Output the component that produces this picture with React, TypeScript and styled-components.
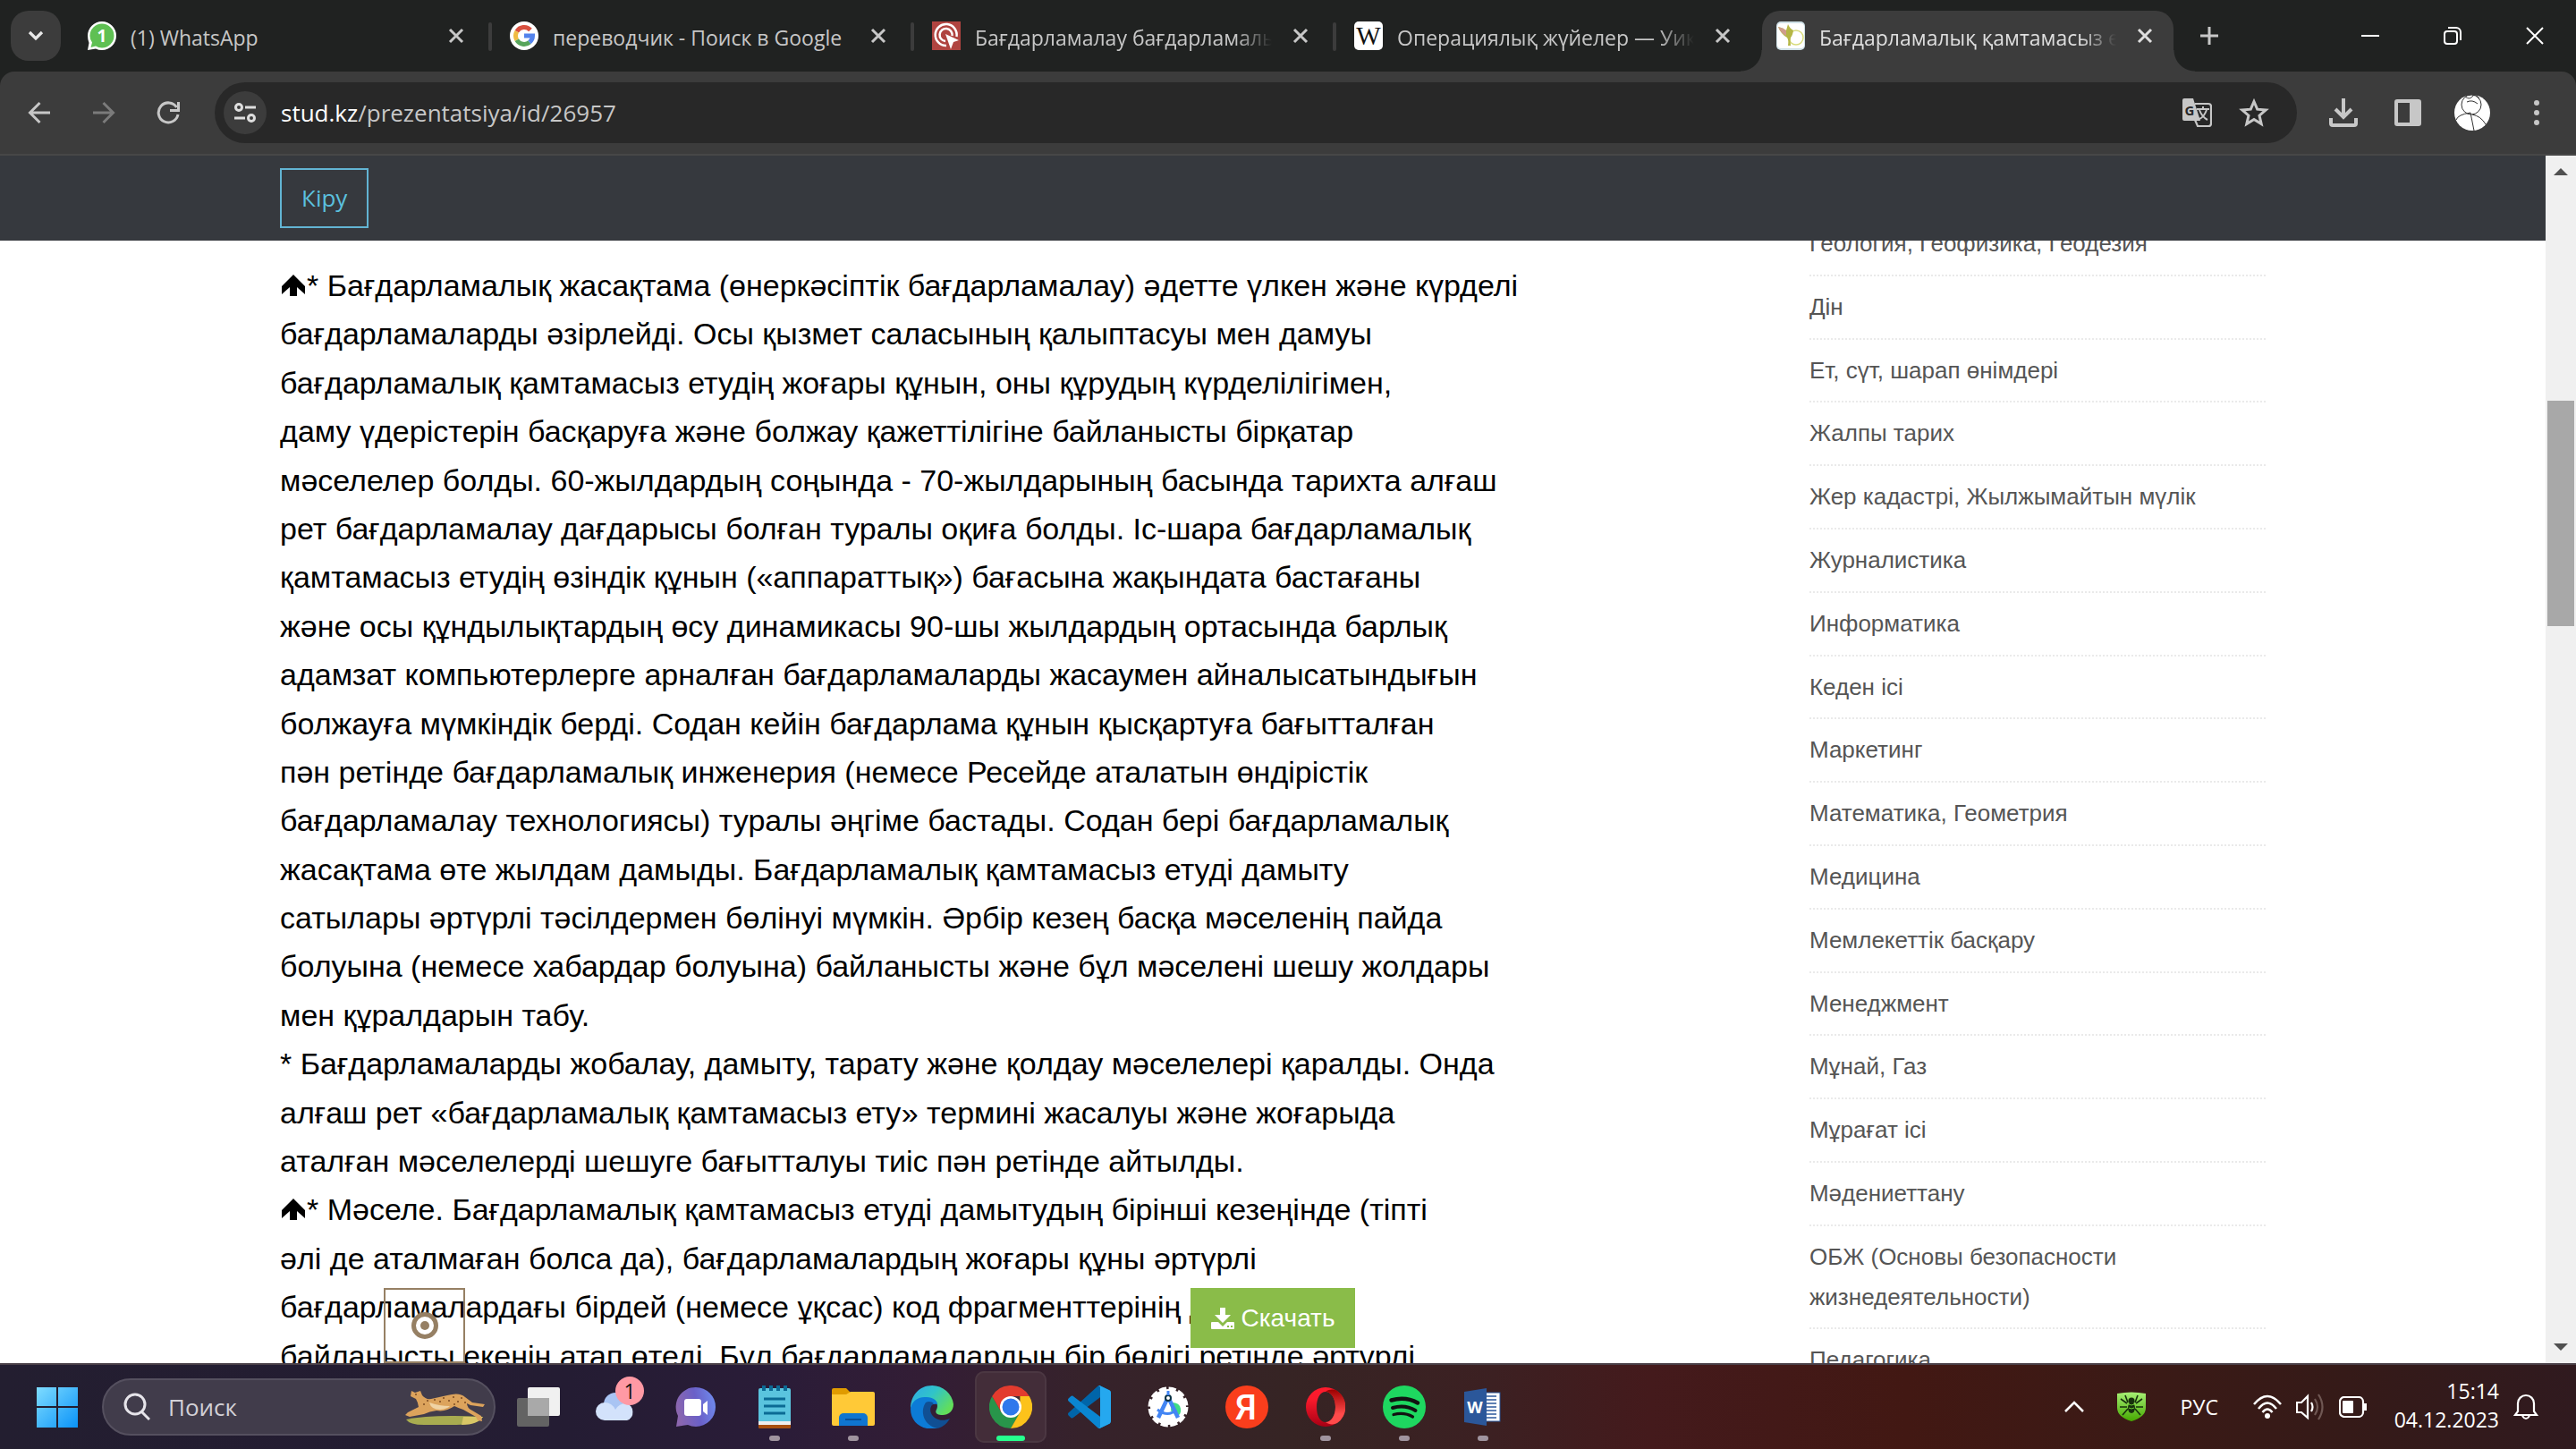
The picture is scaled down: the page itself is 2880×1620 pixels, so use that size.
import React from "react";
import styled, { createGlobalStyle, css } from "styled-components";

const ui = `"Open Sans", "Noto Sans", sans-serif`;
const arial = `"Liberation Sans", Arial, sans-serif`;

const Global = createGlobalStyle`
  * { box-sizing: border-box; }
  body { margin: 0; background: #fff; font-family: ${ui}; }
  button { font: inherit; color: inherit; background: none; border: 0; padding: 0; }
`;

const Screen = styled.div`
  display: flex;
  flex-direction: column;
  height: 100vh;
  overflow: hidden;
`;

/* ---------- Browser chrome ---------- */

const TabStrip = styled.div`
  flex: none;
  display: flex;
  align-items: center;
  height: 80px;
  padding-left: 12px;
  background: #202221;
  color: #c7c7c7;
`;

const ChevronButton = styled.button`
  width: 56px;
  height: 56px;
  margin-right: 14px;
  border-radius: 20px;
  background: #3c3c3c;
  display: grid;
  place-items: center;
`;

const Tabs = styled.div`
  display: flex;
  align-self: stretch;
  gap: 12px;
`;

const Tab = styled.div<{ $active?: boolean; $divider?: boolean }>`
  position: relative;
  display: flex;
  align-items: center;
  width: 460px;
  height: 68px;
  margin-top: 12px;
  padding: 0 22px 12px 16px;
  ${(p) =>
    p.$active &&
    css`
      background: #3c3c3c;
      color: #dfdfdf;
      border-radius: 20px 20px 0 0;
      &::before,
      &::after {
        content: "";
        position: absolute;
        bottom: 0;
        width: 24px;
        height: 24px;
      }
      &::before {
        right: 100%;
        background: radial-gradient(circle at 0 0, transparent 23px, #3c3c3c 24px);
      }
      &::after {
        left: 100%;
        background: radial-gradient(circle at 100% 0, transparent 23px, #3c3c3c 24px);
      }
    `}
  ${(p) =>
    p.$divider &&
    css`
      &::after {
        content: "";
        position: absolute;
        left: calc(100% + 4px);
        top: 13px;
        width: 4px;
        height: 32px;
        border-radius: 2px;
        background: #3c3c3c;
      }
    `}
`;

const TabTitle = styled.span<{ $fade?: boolean }>`
  flex: 1;
  margin: 0 22px 0 16px;
  padding-top: 4px;
  overflow: hidden;
  white-space: nowrap;
  font-size: 23px;
  line-height: 32px;
  ${(p) => p.$fade && css`mask-image: linear-gradient(90deg, #000 88%, transparent);`}
`;

const Fixed = styled.svg`
  flex: none;
  display: block;
`;

const IconButton = styled.button<{ $w: number }>`
  flex: none;
  width: ${(p) => p.$w}px;
  height: 56px;
  display: grid;
  place-items: center;
`;

const WindowButtons = styled.div`
  display: flex;
  margin-left: auto;
  color: #fff;
`;

const ToolbarBack = styled.div`
  flex: none;
  background: #202221;
`;

const Toolbar = styled.div`
  display: flex;
  align-items: center;
  height: 94px;
  padding: 0 4px 0 8px;
  background: #3c3c3c;
  border-bottom: 2px solid #474747;
  border-radius: 16px 16px 0 0;
  color: #c7c7c7;
`;

const Omnibox = styled.div`
  flex: 1;
  display: flex;
  align-items: center;
  height: 68px;
  margin: 0 20px 0 16px;
  padding: 0 16px 0 10px;
  border-radius: 34px;
  background: #282828;
`;

const SiteInfo = styled.button`
  width: 48px;
  height: 48px;
  border-radius: 50%;
  background: #3c3c3c;
  display: grid;
  place-items: center;
`;

const Address = styled.div`
  flex: 1;
  margin-left: 16px;
  font-size: 26px;
  line-height: 40px;
  color: #c7c7c7;
  b {
    font-weight: 400;
    color: #fff;
  }
`;

/* ---------- Page ---------- */

const Viewport = styled.div`
  position: relative;
  flex: 1;
  min-height: 0;
  display: flex;
  overflow: hidden;
`;

const Page = styled.div`
  flex: 1;
  display: flex;
  flex-direction: column;
  min-width: 0;
  background: #fff;
`;

const SiteHeader = styled.header`
  flex: none;
  z-index: 1;
  height: 95px;
  padding: 14px 11%;
  background: #36393e;
`;

const LoginButton = styled.button`
  height: 67px;
  padding: 0 22px 2px;
  border: 2px solid #62b4d3;
  color: #5bc0de;
  font-size: 26px;
`;

const Columns = styled.div`
  flex: 1;
  min-height: 0;
  display: flex;
  justify-content: space-between;
  padding: 0 11%;
`;

const Article = styled.article`
  padding-top: 23px;
  font-family: ${arial};
  font-size: 34px;
  line-height: 1.6;
  color: #000;
  white-space: nowrap;
  svg {
    display: inline-block;
    margin: 0 2px;
  }
`;

const Side = styled.ul`
  flex: none;
  width: 510px;
  margin: -31px 0 0;
  padding: 0;
  list-style: none;
  font-family: ${arial};
  font-size: 28px;
  line-height: 1.6;
`;

const SideItem = styled.li`
  padding: 12px 0;
  border-bottom: 2px dotted #eaeaea;
`;

const SideLink = styled.a`
  font-size: 26px;
  color: #555;
  text-decoration: none;
`;

const Target = styled.button`
  position: absolute;
  left: 429px;
  bottom: 0;
  width: 91px;
  height: 84px;
  border: 2px solid #968064;
  display: grid;
  place-items: center;
`;

const Download = styled.button`
  position: absolute;
  left: 1331px;
  bottom: 17px;
  display: flex;
  align-items: center;
  justify-content: center;
  gap: 8px;
  width: 184px;
  height: 67px;
  background: #8abc49;
  color: #fff;
  font-family: ${arial};
  font-size: 28px;
`;

const Scrollbar = styled.div`
  flex: none;
  width: 34px;
  padding: 0 2px;
  background: #f0f0f0;
  display: flex;
  flex-direction: column;
  justify-content: space-between;
`;

const ScrollTrack = styled.div`
  flex: 1;
  padding-top: 240px;
`;

const ScrollThumb = styled.div`
  height: 252px;
  background: #a8a8a8;
`;

/* ---------- Taskbar ---------- */

const Taskbar = styled.footer`
  flex: none;
  display: flex;
  align-items: center;
  height: 96px;
  border-top: 2px solid #4a4048;
  padding: 0 34px 0 28px;
  color: #fff;
  background: linear-gradient(
    90deg,
    #231e30 0%,
    #241c33 22%,
    #2a1c38 30%,
    #331d35 36%,
    #36222b 42%,
    #362424 50%,
    #3c2022 58%,
    #441a1c 64%,
    #421813 74%,
    #3a1a16 84%,
    #351a18 91%,
    #301a1f 100%
  );
`;

const StartButton = styled.button`
  width: 72px;
  height: 80px;
  display: grid;
  place-items: center;
`;

const SearchBox = styled.label`
  display: flex;
  align-items: center;
  width: 440px;
  height: 64px;
  margin: 0 4px 0 14px;
  padding: 0 8px 0 22px;
  border: 2px solid #55505f;
  border-radius: 32px;
  background: #413c4b;
`;

const SearchInput = styled.input`
  flex: 1;
  min-width: 0;
  margin-left: 20px;
  padding: 0;
  border: 0;
  outline: 0;
  background: none;
  font-family: ${ui};
  font-size: 26px;
  color: #fff;
  &::placeholder {
    color: #d2d0d6;
    opacity: 1;
  }
`;

const AppButton = styled.button<{ $active?: boolean; $mark?: "dot" | "bar" }>`
  position: relative;
  width: 80px;
  height: 80px;
  margin: 0 4px;
  border-radius: 10px;
  display: grid;
  place-items: center;
  ${(p) => p.$active && css`background: #432d39; box-shadow: inset 0 0 0 2px #4b3742;`}
  ${(p) =>
    p.$mark &&
    css`
      &::after {
        content: "";
        position: absolute;
        bottom: 2px;
        left: 50%;
        transform: translateX(-50%);
        width: ${p.$mark === "bar" ? 32 : 12}px;
        height: 6px;
        border-radius: 3px;
        background: ${p.$mark === "bar" ? "#26ff8e" : "#a0949f"};
      }
    `}
`;

const Badge = styled.span`
  position: absolute;
  top: 6px;
  left: 38px;
  width: 32px;
  height: 32px;
  border-radius: 50%;
  background: #ff99a4;
  color: #111;
  font-size: 23px;
  line-height: 32px;
`;

const Tray = styled.div`
  display: flex;
  align-items: center;
  margin-left: auto;
`;

const TrayButton = styled.button<{ $w: number }>`
  width: ${(p) => p.$w}px;
  height: 80px;
  display: grid;
  place-items: center;
  font-size: 23px;
`;

const StatusGroup = styled.div`
  display: flex;
  padding: 0 22px 0 8px;
`;

const Clock = styled.button`
  margin-right: 8px;
  padding-bottom: 4px;
  text-align: right;
  font-size: 23px;
  line-height: 32px;
`;

/* ---------- Icons ---------- */

const CloseX = () => (
  <Fixed width="20" height="20" viewBox="0 0 20 20" stroke="currentColor" strokeWidth="3">
    <path d="M3 3L17 17M17 3L3 17" />
  </Fixed>
);

const WhatsAppIcon = () => (
  <Fixed width="32" height="32" viewBox="0 0 32 32">
    <path d="M16 0a16 16 0 0 1 0 32q-4 0-7-1.500L0 32l1.500-8Q0 20 0 16A16 16 0 0 1 16 0z" fill="#fff" />
    <path d="M16 2.500a13.500 13.500 0 0 1 0 27q-4 0-7-2l-5.500 1.500 1.500-5.500Q2.500 20 2.500 16A13.500 13.500 0 0 1 16 2.500z" fill="#5fc053" />
    <text x="16" y="23" textAnchor="middle" fontFamily="Open Sans" fontWeight="700" fontSize="19" fill="#fff">1</text>
  </Fixed>
);

const GoogleIcon = () => (
  <Fixed width="32" height="32" viewBox="0 0 32 32" fill="none" strokeWidth="5">
    <circle cx="16" cy="16" r="16" fill="#fff" />
    <path d="M23 9.500A9.500 9.500 0 0 0 7.800 11.300" stroke="#d8503f" />
    <path d="M7.800 11.300a9.500 9.500 0 0 0 0 9.400" stroke="#f0bc42" />
    <path d="M7.800 20.700A9.500 9.500 0 0 0 22 23.300" stroke="#58a55c" />
    <path d="M22 23.300a9.500 9.500 0 0 0 3.500-7.300H16" stroke="#5383ec" />
  </Fixed>
);

const TargetIcon = () => (
  <Fixed width="32" height="32" viewBox="0 0 32 32" fill="none">
    <rect width="32" height="32" fill="#b04440" />
    <path d="M16 27A12 12 0 1 1 27.500 17" stroke="#fff" strokeWidth="2.500" />
    <path d="M15 22a7 7 0 1 1 7.500-6" stroke="#fff" strokeWidth="2.500" />
    <path d="M15 14l15 7-6 2-3 8z" fill="#fff" />
  </Fixed>
);

const WikiIcon = () => (
  <Fixed width="32" height="32" viewBox="0 0 32 32">
    <rect width="32" height="32" rx="5" fill="#fff" />
    <text x="16" y="26" textAnchor="middle" fontFamily="Liberation Serif" fontSize="29" fill="#111">W</text>
  </Fixed>
);

const BirdIcon = () => (
  <Fixed width="32" height="32" viewBox="0 0 32 32">
    <rect width="32" height="32" rx="5" fill="#cfe0e6" />
    <rect x="1" y="2" width="30" height="28" rx="4" fill="#fff" />
    <circle cx="22" cy="18" r="8" fill="none" stroke="#d8dc7c" strokeWidth="1.500" />
    <path d="M2 6q5 1 9 4l2-7q2 5 6 7-1 6-3 8-1 4 0 9h-3q1-6-1-9Q5 14 2 6z" fill="#b4b645" />
    <path d="M2 6q5 1 9 4l0 6Q5 13 2 6z" fill="#cf9c8c" />
  </Fixed>
);

const Star = () => (
  <Fixed width="34" height="34" viewBox="0 0 34 34" fill="none" stroke="currentColor" strokeWidth="3">
    <path d="M17 4.500l3.700 8.700 9.500.8-7.200 6.200 2.200 9.300L17 24.500l-8.200 5 2.200-9.300L3.800 14l9.500-.8z" />
  </Fixed>
);

const TranslateIcon = () => (
  <Fixed width="34" height="34" viewBox="0 0 34 34">
    <path d="M15 7h15a3 3 0 0 1 3 3v19a3 3 0 0 1-3 3H18l-3-7" fill="none" stroke="currentColor" strokeWidth="2.200" />
    <path d="M17 13h14M24 10v3M20 14q3 8 9 11M28 14q-3 8-8 10" fill="none" stroke="currentColor" strokeWidth="2" />
    <path d="M3 1h10l8 25H3a2 2 0 0 1-2-2V3a2 2 0 0 1 2-2z" fill="currentColor" />
    <text x="9" y="20" textAnchor="middle" fontFamily="Open Sans" fontWeight="700" fontSize="15" fill="#282828">G</text>
  </Fixed>
);

const UpArrow = () => (
  <svg width="26" height="24" viewBox="0 0 26 24">
    <path d="M13 0L26 13v9l-9-8v10H9V14l-9 8v-9z" fill="#000" />
  </svg>
);

const TaskViewIcon = () => (
  <svg width="50" height="46" viewBox="0 0 50 46">
    <rect x="13" y="1" width="36" height="32" rx="2" fill="#f0f0f0" />
    <rect x="1" y="13" width="36" height="32" rx="2" fill="#636363" />
    <path d="M13 13h24v20H13z" fill="#a9a9a9" />
  </svg>
);

const WeatherIcon = () => (
  <svg width="50" height="48" viewBox="0 0 50 48">
    <circle cx="23" cy="21" r="13" fill="#a9c4f3" />
    <path d="M11 39a10 10 0 0 1 0-20q8 0 12 8 4-7 12-7a10 10 0 0 1 1 19z" fill="#d3e2fb" />
  </svg>
);

const ChatIcon = () => (
  <svg width="48" height="48" viewBox="0 0 48 48">
    <defs>
      <linearGradient id="chat" x1="0" x2="1" y1="0.4" y2="0.2">
        <stop stopColor="#8b66ae" />
        <stop offset="0.5" stopColor="#6a60c8" />
        <stop offset="1" stopColor="#6f8cee" />
      </linearGradient>
    </defs>
    <path d="M24 2a22 22 0 0 1 0 44q-5 0-9-2L2 46l2-12A22 22 0 0 1 24 2z" fill="url(#chat)" />
    <rect x="11" y="15" width="19" height="19" rx="3" fill="#fff" />
    <path d="M32 21l5-4v16l-5-4z" fill="#fff" />
  </svg>
);

const NotepadIcon = () => (
  <svg width="36" height="48" viewBox="0 0 36 48">
    <rect y="40" width="36" height="8" rx="1" fill="#a8500f" />
    <rect y="36" width="36" height="8" fill="#eee" />
    <path d="M2 3h32a2 2 0 0 1 2 2v35H0V5a2 2 0 0 1 2-2z" fill="#5ac4de" />
    <path d="M6 0v6M14 0v6M22 0v6M30 0v6" stroke="#0b6a94" strokeWidth="4" />
    <path d="M6 15h24M6 23h24M6 31h24" stroke="#0b6a94" strokeWidth="3" />
  </svg>
);

const FolderIcon = () => (
  <svg width="48" height="44" viewBox="0 0 48 44">
    <path d="M0 3a2 2 0 0 1 2-2h14l5 5v8H0z" fill="#e09b00" />
    <path d="M0 8h16l5-3h25a2 2 0 0 1 2 2v34a2 2 0 0 1-2 2H2a2 2 0 0 1-2-2z" fill="#ffc937" />
    <path d="M8 43V34a5 5 0 0 1 5-5h22a5 5 0 0 1 5 5v9z" fill="#0f75d0" />
    <path d="M15 36h18" stroke="#0a4f96" strokeWidth="2" />
  </svg>
);

const EdgeIcon = () => (
  <svg width="48" height="48" viewBox="0 0 48 48">
    <defs>
      <linearGradient id="edgeTop" x1="0" x2="1" y1="0" y2=".6">
        <stop stopColor="#2fa8e8" />
        <stop offset=".5" stopColor="#30c4c9" />
        <stop offset="1" stopColor="#62de5a" />
      </linearGradient>
    </defs>
    <path d="M24 0a24 24 0 0 1 24 21c0 8-6 12-12 12-7 0-9-3-7-6 3-6-1-13-10-13C9 14 2 20 0 26 0 11 10 0 24 0z" fill="url(#edgeTop)" />
    <path d="M0 26c1-8 8-14 18-13 7 0 12 4 12 8-11-2-15 10-9 18 3 5 9 9 9 9-16 3-30-6-30-22z" fill="#0c7bd6" />
    <path d="M17 19c-7 10-2 26 13 29 7-2 11-6 14-11-9 4-18 1-21-6-2-5 0-9 3-11-2-2-6-3-9-1z" fill="#104f93" />
  </svg>
);

const ChromeIcon = () => (
  <svg width="48" height="48" viewBox="0 0 48 48">
    <path d="M3.200 12A24 24 0 0 1 44.800 12H24z" fill="#e33b2e" />
    <path d="M3.200 12A24 24 0 0 0 24 48l10.400-18L24 34 13.600 30z" fill="#28954a" />
    <path d="M44.800 12A24 24 0 0 1 24 48l10.400-18V12z" fill="#fcc21b" />
    <path d="M3.200 12L13.600 30 24 12z" fill="#e33b2e" />
    <circle cx="24" cy="24" r="12" fill="#fff" />
    <circle cx="24" cy="24" r="9.500" fill="#2f78ec" />
  </svg>
);

const CodeIcon = () => (
  <svg width="48" height="48" viewBox="0 0 100 100">
    <path d="M96.460 10.800L75.860.880C73.470-.270 70.620.210 68.750 2.080L1.300 63.580c-1.810 1.650-1.810 4.510 0 6.160l5.510 5.010c1.490 1.350 3.720 1.450 5.320.240L93.360 13.370C96.090 11.300 100 13.250 100 16.670v-.240c0-2.400-1.380-4.590-3.540-5.630z" fill="#0065a9" />
    <path d="M96.460 89.200L75.860 99.120c-2.390 1.150-5.240.670-7.110-1.200L1.300 36.420c-1.810-1.650-1.810-4.510 0-6.160l5.510-5.010c1.490-1.350 3.720-1.450 5.320-.240L93.360 86.630c2.730 2.070 6.640.120 6.640-3.300v.240c0 2.400-1.380 4.590-3.540 5.630z" fill="#0a86d1" />
    <path d="M75.860 99.130c-2.390 1.150-5.240.660-7.110-1.210C71.060 100.220 75 98.590 75 95.330V4.670c0-3.260-3.940-4.890-6.250-2.590C70.620.210 73.470-.270 75.860.870l20.600 9.910c2.160 1.040 3.540 3.230 3.540 5.630v67.180c0 2.400-1.380 4.590-3.540 5.630z" fill="#25a8ef" />
  </svg>
);

const AndroidStudioIcon = () => (
  <svg width="46" height="46" viewBox="0 0 46 46" fill="none">
    <circle cx="23" cy="23" r="20" fill="#fff" stroke="#fff" strokeWidth="5" strokeDasharray="8 2.470" strokeLinejoin="round" />
    <path d="M27 18q9 0 10 7t-5 8l-6-6z" fill="#3ddc84" />
    <path d="M22 14L12 35M24 14l10 21" stroke="#4285f4" strokeWidth="4.500" />
    <path d="M11 26q12 9 21 0" stroke="#4285f4" strokeWidth="3" />
    <circle cx="23" cy="13" r="3" stroke="#073042" strokeWidth="2" fill="#fff" />
    <path d="M23 5v5" stroke="#4285f4" strokeWidth="3" />
  </svg>
);

const YandexIcon = () => (
  <svg width="48" height="48" viewBox="0 0 48 48">
    <circle cx="24" cy="24" r="24" fill="#fa3e1c" />
    <text x="23" y="38" textAnchor="middle" fontFamily="Roboto" fontWeight="500" fontSize="39" fill="#fff">Я</text>
  </svg>
);

const OperaIcon = () => (
  <svg width="44" height="44" viewBox="0 0 44 44">
    <defs>
      <linearGradient id="opera" x1="0" x2="0" y1="0" y2="1">
        <stop stopColor="#ff1b2d" />
        <stop offset=".3" stopColor="#fa1a2c" />
        <stop offset="1" stopColor="#a70014" />
      </linearGradient>
      <linearGradient id="operaInner" x1="0" x2="0" y1="0" y2="1">
        <stop stopColor="#9c0000" />
        <stop offset=".7" stopColor="#ff4b4b" />
      </linearGradient>
    </defs>
    <path fillRule="evenodd" d="M22 0a22 22 0 1 1 0 44 22 22 0 0 1 0-44zm0 5c-6 0-10 7-10 17s4 17 10 17 11-7 11-17S28 5 22 5z" fill="url(#opera)" />
    <path d="M22 5c4-3 9-3 13-1a22 22 0 0 1 0 36c-4 2-9 2-13-1 6 0 11-7 11-17S28 5 22 5z" fill="url(#operaInner)" />
  </svg>
);

const SpotifyIcon = () => (
  <svg width="48" height="48" viewBox="0 0 48 48" fill="none" stroke="#111" strokeLinecap="round">
    <circle cx="24" cy="24" r="24" fill="#1ed760" stroke="none" />
    <path d="M9.500 16.500q16-4.500 29.500 3" strokeWidth="4.500" />
    <path d="M11 25q14-4 25.500 3" strokeWidth="4" />
    <path d="M12 32.500q12-3 21.500 2.500" strokeWidth="3.200" />
  </svg>
);

const WordIcon = () => (
  <svg width="42" height="42" viewBox="0 0 42 42">
    <rect x="18" y="5" width="22" height="32" fill="#fff" stroke="#2b579a" strokeWidth="1" />
    <path d="M25 9h11M25 13h11M25 17h11M25 21h11M25 25h11M25 29h11M25 33h11" stroke="#2b579a" strokeWidth="1.500" />
    <path d="M0 4L25 0v42L0 38z" fill="#2b579a" />
    <text x="12" y="28" textAnchor="middle" fontFamily="Open Sans" fontWeight="700" fontSize="18" fill="#fff">W</text>
  </svg>
);

const CheetahIcon = () => (
  <Fixed width="92" height="44" viewBox="0 0 92 44">
    <path d="M2 36Q30 30 88 33q-8 9-30 9H22Q6 42 2 36z" fill="#a8ac50" />
    <path d="M66 33h22q-6 9-24 9z" fill="#d8c766" />
    <path d="M8 4l4 2 6-2 2 5q4 5 10 4l18-4q14-4 20 2l8 6 14 2-2 3-14-2-4-2q0 5 6 8l10 6 1 6-5-1-2-4-14-8q-6-2-10-4-10 7-20 5-8 1-14 4L6 33l-5-2 3-3 12-6q-1-6-3-9l-6-3z" fill="#dca35c" />
    <path d="M28 17q2 8 12 8 8-1 11-4-12 0-23-4z" fill="#f0d3a4" />
    <g fill="#7d4a20">
      <circle cx="34" cy="14" r="1" /><circle cx="40" cy="16" r="1" /><circle cx="44" cy="12" r="1" />
      <circle cx="50" cy="15" r="1" /><circle cx="55" cy="11" r="1" /><circle cx="60" cy="16" r="1" />
      <circle cx="64" cy="12" r="1" /><circle cx="22" cy="19" r="1" /><circle cx="56" cy="19" r="1" />
      <circle cx="68" cy="17" r="1" /><circle cx="26" cy="15" r="1" /><circle cx="13" cy="8" r="1" />
    </g>
  </Fixed>
);

const ShieldIcon = () => (
  <svg width="32" height="34" viewBox="0 0 32 34" fill="none">
    <defs>
      <linearGradient id="shield" x1="0" x2="0" y1="0" y2="1">
        <stop stopColor="#a6ef74" />
        <stop offset="1" stopColor="#45a800" />
      </linearGradient>
    </defs>
    <path d="M0 2Q16-1 32 2v16q0 10-16 15Q0 28 0 18z" fill="url(#shield)" />
    <path d="M12 12L9 4M20 12l3-8M11 13L4 8M21 13l7-5M11 17H3M21 17h8M12 19l-6 7M20 19l6 7" stroke="#17300d" strokeWidth="1.600" />
    <ellipse cx="16" cy="18" rx="4" ry="6" fill="#17300d" />
    <circle cx="16" cy="10" r="3.500" fill="#17300d" />
    <path d="M13 14q3 2 6 0M13 18q3 2 6 0" stroke="#6cc930" strokeWidth="1" />
  </svg>
);

/* ---------- Content ---------- */

const tabs = [
  { title: "(1) WhatsApp", icon: <WhatsAppIcon /> },
  { title: "переводчик - Поиск в Google", icon: <GoogleIcon /> },
  { title: "Бағдарламалау бағдарламалық", icon: <TargetIcon />, fade: true },
  { title: "Операциялық жүйелер — Уикипедия", icon: <WikiIcon />, fade: true },
  { title: "Бағдарламалық қамтамасыз ету", icon: <BirdIcon />, fade: true },
];

const lines = [
  "^* Бағдарламалық жасақтама (өнеркәсіптік бағдарламалау) әдетте үлкен және күрделі",
  "бағдарламаларды әзірлейді. Осы қызмет саласының қалыптасуы мен дамуы",
  "бағдарламалық қамтамасыз етудің жоғары құнын, оны құрудың күрделілігімен,",
  "даму үдерістерін басқаруға және болжау қажеттілігіне байланысты бірқатар",
  "мәселелер болды. 60-жылдардың соңында - 70-жылдарының басында тарихта алғаш",
  "рет бағдарламалау дағдарысы болған туралы оқиға болды. Іс-шара бағдарламалық",
  "қамтамасыз етудің өзіндік құнын («аппараттық») бағасына жақындата бастағаны",
  "және осы құндылықтардың өсу динамикасы 90-шы жылдардың ортасында барлық",
  "адамзат компьютерлерге арналған бағдарламаларды жасаумен айналысатындығын",
  "болжауға мүмкіндік берді. Содан кейін бағдарлама құнын қысқартуға бағытталған",
  "пән ретінде бағдарламалық инженерия (немесе Ресейде аталатын өндірістік",
  "бағдарламалау технологиясы) туралы әңгіме бастады. Содан бері бағдарламалық",
  "жасақтама өте жылдам дамыды. Бағдарламалық қамтамасыз етуді дамыту",
  "сатылары әртүрлі тәсілдермен бөлінуі мүмкін. Әрбір кезең басқа мәселенің пайда",
  "болуына (немесе хабардар болуына) байланысты және бұл мәселені шешу жолдары",
  "мен құралдарын табу.",
  "* Бағдарламаларды жобалау, дамыту, тарату және қолдау мәселелері қаралды. Онда",
  "алғаш рет «бағдарламалық қамтамасыз ету» термині жасалуы және жоғарыда",
  "аталған мәселелерді шешуге бағытталуы тиіс пән ретінде айтылды.",
  "^* Мәселе. Бағдарламалық қамтамасыз етуді дамытудың бірінші кезеңінде (тіпті",
  "әлі де аталмаған болса да), бағдарламалардың жоғары құны әртүрлі",
  "бағдарламалардағы бірдей (немесе ұқсас) код фрагменттерінің дамуына",
  "байланысты екенін атап өтеді. Бұл бағдарламалардың бір бөлігі ретінде әртүрлі",
];

const subjects = [
  "Геология, Геофизика, Геодезия",
  "Дін",
  "Ет, сүт, шарап өнімдері",
  "Жалпы тарих",
  "Жер кадастрі, Жылжымайтын мүлік",
  "Журналистика",
  "Информатика",
  "Кеден ісі",
  "Маркетинг",
  "Математика, Геометрия",
  "Медицина",
  "Мемлекеттік басқару",
  "Менеджмент",
  "Мұнай, Газ",
  "Мұрағат ісі",
  "Мәдениеттану",
  "ОБЖ (Основы безопасности жизнедеятельности)",
  "Педагогика",
];

const apps: { name: string; icon: React.ReactNode; mark?: "dot" | "bar"; badge?: string }[] = [
  { name: "Представление задач", icon: <TaskViewIcon /> },
  { name: "Погода", icon: <WeatherIcon />, badge: "1" },
  { name: "Чат", icon: <ChatIcon /> },
  { name: "Блокнот", icon: <NotepadIcon />, mark: "dot" },
  { name: "Проводник", icon: <FolderIcon />, mark: "dot" },
  { name: "Edge", icon: <EdgeIcon /> },
  { name: "Chrome", icon: <ChromeIcon />, mark: "bar" },
  { name: "VS Code", icon: <CodeIcon /> },
  { name: "Android Studio", icon: <AndroidStudioIcon /> },
  { name: "Яндекс", icon: <YandexIcon /> },
  { name: "Opera", icon: <OperaIcon />, mark: "dot" },
  { name: "Spotify", icon: <SpotifyIcon />, mark: "dot" },
  { name: "Word", icon: <WordIcon />, mark: "dot" },
];

export default function App() {
  return (
    <Screen>
      <Global />
      <TabStrip>
        <ChevronButton aria-label="Поиск вкладок">
          <svg width="18" height="14" viewBox="0 0 18 14" fill="none" stroke="#e8e8e8" strokeWidth="3.200">
            <path d="M2 3l7 7 7-7" />
          </svg>
        </ChevronButton>
        <Tabs>
          {tabs.map((t, i) => (
            <Tab key={t.title} $active={i === 4} $divider={i < 3}>
              {t.icon}
              <TabTitle $fade={t.fade}>{t.title}</TabTitle>
              <button aria-label="Закрыть вкладку"><CloseX /></button>
            </Tab>
          ))}
        </Tabs>
        <IconButton $w={80} aria-label="Новая вкладка">
          <svg width="22" height="22" viewBox="0 0 22 22" stroke="currentColor" strokeWidth="3">
            <path d="M11 1v20M1 11h20" />
          </svg>
        </IconButton>
        <WindowButtons>
          <IconButton $w={92} aria-label="Свернуть">
            <svg width="20" height="20" viewBox="0 0 20 20" stroke="currentColor" strokeWidth="2"><path d="M0 10h20" /></svg>
          </IconButton>
          <IconButton $w={92} aria-label="Восстановить">
            <svg width="20" height="20" viewBox="0 0 20 20" fill="none" stroke="currentColor" strokeWidth="2">
              <rect x="1" y="5" width="14" height="14" rx="3" />
              <path d="M5 1h9a5 5 0 0 1 5 5v9" />
            </svg>
          </IconButton>
          <IconButton $w={92} aria-label="Закрыть">
            <svg width="20" height="20" viewBox="0 0 20 20" stroke="currentColor" strokeWidth="2"><path d="M1 1l18 18M19 1L1 19" /></svg>
          </IconButton>
        </WindowButtons>
      </TabStrip>

      <ToolbarBack>
        <Toolbar>
          <IconButton $w={72} aria-label="Назад">
            <svg width="26" height="26" viewBox="0 0 26 26" fill="none" stroke="currentColor" strokeWidth="3"><path d="M25 13H3M13.500 2L2.500 13l11 11" /></svg>
          </IconButton>
          <IconButton $w={72} aria-label="Вперёд">
            <svg width="26" height="26" viewBox="0 0 26 26" fill="none" stroke="#7b7b7b" strokeWidth="3"><path d="M1 13h22M12.500 2l11 11-11 11" /></svg>
          </IconButton>
          <IconButton $w={72} aria-label="Обновить">
            <svg width="26" height="26" viewBox="0 0 26 26" fill="none" stroke="currentColor" strokeWidth="3">
              <path d="M22.500 7A11 11 0 1 0 24 15M24.500 1v9.500H15" />
            </svg>
          </IconButton>
          <Omnibox>
            <SiteInfo aria-label="Сведения о сайте">
              <svg width="26" height="24" viewBox="0 0 26 24" fill="none" stroke="#dedede" strokeWidth="3">
                <circle cx="6" cy="6" r="3.500" /><path d="M13 6h12M1 18h12" /><circle cx="20" cy="18" r="3.500" />
              </svg>
            </SiteInfo>
            <Address><b>stud.kz</b>/prezentatsiya/id/26957</Address>
            <IconButton $w={64} aria-label="Перевести"><TranslateIcon /></IconButton>
            <IconButton $w={64} aria-label="Добавить в закладки"><Star /></IconButton>
          </Omnibox>
          <IconButton $w={64} aria-label="Загрузки">
            <svg width="32" height="34" viewBox="0 0 32 34" fill="none" stroke="currentColor" strokeWidth="4">
              <path d="M16 1v20M7 13l9 9 9-9M2 23v6a2 2 0 0 0 2 2h24a2 2 0 0 0 2-2v-6" />
            </svg>
          </IconButton>
          <IconButton $w={80} aria-label="Боковая панель">
            <svg width="30" height="30" viewBox="0 0 30 30">
              <path fillRule="evenodd" d="M3 0h24a3 3 0 0 1 3 3v24a3 3 0 0 1-3 3H3a3 3 0 0 1-3-3V3a3 3 0 0 1 3-3zm1 4v22h13V4z" fill="currentColor" />
            </svg>
          </IconButton>
          <IconButton $w={64} aria-label="Профиль">
            <svg width="40" height="40" viewBox="0 0 40 40" fill="none" stroke="#333" strokeWidth="1">
              <circle cx="20" cy="20" r="20" fill="#fff" stroke="none" />
              <circle cx="19" cy="11" r="11" />
              <path d="M12 2q5 4 8 0t8 2M14 8q6-3 12 2M18 20l4 20M18 20Q4 22 2 28M20 22q10 2 15 11" />
            </svg>
          </IconButton>
          <IconButton $w={80} aria-label="Меню">
            <svg width="8" height="28" viewBox="0 0 8 28" fill="currentColor">
              <circle cx="4" cy="3" r="3" /><circle cx="4" cy="14" r="3" /><circle cx="4" cy="25" r="3" />
            </svg>
          </IconButton>
        </Toolbar>
      </ToolbarBack>

      <Viewport>
        <Page>
          <SiteHeader><LoginButton>Кіру</LoginButton></SiteHeader>
          <Columns>
            <Article>
              {lines.map((l) => (
                <React.Fragment key={l}>
                  {l[0] === "^" ? <><UpArrow />{l.slice(1)}</> : l}
                  <br />
                </React.Fragment>
              ))}
            </Article>
            <Side>
              {subjects.map((s) => (
                <SideItem key={s}><SideLink href="#">{s}</SideLink></SideItem>
              ))}
            </Side>
          </Columns>
        </Page>
        <Scrollbar>
          <svg width="30" height="34" viewBox="0 0 30 34"><path d="M7 22h16L15 14z" fill="#505050" /></svg>
          <ScrollTrack><ScrollThumb /></ScrollTrack>
          <svg width="30" height="34" viewBox="0 0 30 34"><path d="M7 12h16l-8 8z" fill="#505050" /></svg>
        </Scrollbar>
        <Target aria-label="Цель">
          <svg width="30" height="30" viewBox="0 0 30 30">
            <circle cx="15" cy="15" r="12.500" fill="#fff" stroke="#968064" strokeWidth="5" />
            <circle cx="15" cy="15" r="5" fill="#968064" />
          </svg>
        </Target>
        <Download>
          <svg width="26" height="24" viewBox="0 0 26 24" fill="#fff">
            <path d="M10 0h6v8h6l-9 9-9-9h6z" />
            <path fillRule="evenodd" d="M1 16h7l5 5 5-5h7a1 1 0 0 1 1 1v6a1 1 0 0 1-1 1H1a1 1 0 0 1-1-1v-6a1 1 0 0 1 1-1zm17 4v2h2v-2zm4 0v2h2v-2z" />
          </svg>
          Скачать
        </Download>
      </Viewport>

      <Taskbar>
        <StartButton aria-label="Пуск">
          <svg width="46" height="46" viewBox="0 0 46 46">
            <defs>
              <linearGradient id="win" x1="0" x2="1" y1="0" y2="1">
                <stop stopColor="#7fdcff" />
                <stop offset="1" stopColor="#0a93f8" />
              </linearGradient>
            </defs>
            <path d="M0 1h22v21H0zM24 1h22v21H24zM0 24h22v22H0zM24 24h22v22H24z" fill="url(#win)" />
          </svg>
        </StartButton>
        <SearchBox>
          <Fixed width="30" height="32" viewBox="0 0 30 32" fill="none" stroke="#e6e4ea" strokeWidth="3">
            <circle cx="13" cy="13" r="11" /><path d="M20 21l9 9" />
          </Fixed>
          <SearchInput placeholder="Поиск" aria-label="Поиск" />
          <CheetahIcon />
        </SearchBox>
        {apps.map((a) => (
          <AppButton key={a.name} aria-label={a.name} $active={a.mark === "bar"} $mark={a.mark}>
            {a.icon}
            {a.badge && <Badge>{a.badge}</Badge>}
          </AppButton>
        ))}
        <Tray>
          <TrayButton $w={64} aria-label="Скрытые значки">
            <svg width="22" height="14" viewBox="0 0 22 14" fill="none" stroke="#fff" strokeWidth="2.500"><path d="M1 12L11 2l10 10" /></svg>
          </TrayButton>
          <TrayButton $w={64} aria-label="Антивирус"><ShieldIcon /></TrayButton>
          <TrayButton $w={88}>РУС</TrayButton>
          <StatusGroup>
            <TrayButton $w={48} aria-label="Сеть">
              <svg width="32" height="28" viewBox="0 0 32 28" fill="none" stroke="#fff" strokeWidth="2.500">
                <path d="M1 11q15-18 30 0M6 16q10-13 20 0M10.500 20q5.500-7 11 0" />
                <circle cx="16" cy="24" r="3" fill="#fff" stroke="none" />
              </svg>
            </TrayButton>
            <TrayButton $w={48} aria-label="Звук">
              <svg width="32" height="32" viewBox="0 0 32 32" fill="none" stroke="#fff" strokeWidth="2.200">
                <path d="M13 4v24l-7-6H1V11h5zM17 11q3 5 0 10" />
                <path d="M21 7q6 9 0 18M25 2q9 14 0 28" stroke="#6f5753" />
              </svg>
            </TrayButton>
            <TrayButton $w={48} aria-label="Батарея">
              <svg width="32" height="24" viewBox="0 0 32 24" fill="none" stroke="#fff" strokeWidth="2.200">
                <rect x="1" y="1" width="26" height="22" rx="5" />
                <rect x="4" y="5" width="12" height="14" rx="1" fill="#fff" stroke="none" />
                <path d="M29 8v8" strokeWidth="4" />
              </svg>
            </TrayButton>
          </StatusGroup>
          <Clock>15:14<br />04.12.2023</Clock>
          <TrayButton $w={44} aria-label="Уведомления">
            <svg width="28" height="30" viewBox="0 0 28 30" fill="none" stroke="#fff" strokeWidth="2.200">
              <path d="M5 20V11a9 9 0 0 1 18 0v9l3 4H2zM10 25q4 6 8 0" />
            </svg>
          </TrayButton>
        </Tray>
      </Taskbar>
    </Screen>
  );
}
